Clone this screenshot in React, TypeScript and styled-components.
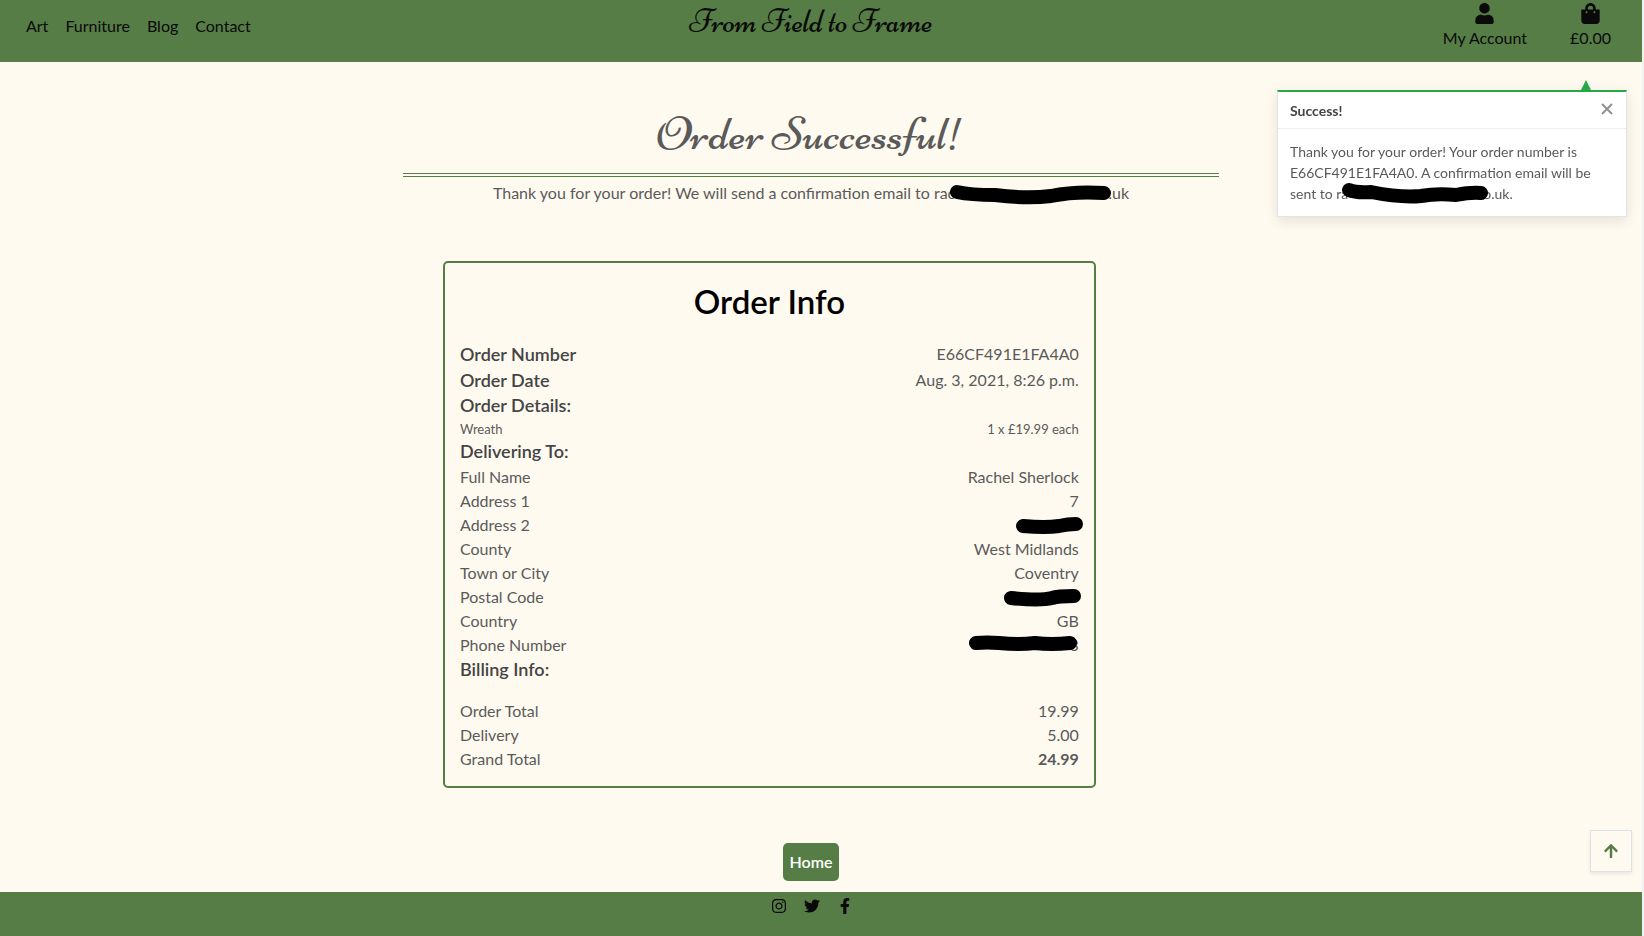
import React from "react";
import styled, { createGlobalStyle } from "styled-components";
import { FaUser, FaShoppingBag, FaInstagram, FaTwitter, FaFacebookF, FaArrowUp } from "react-icons/fa";

const GREEN = "#567d46";

const GlobalStyle = createGlobalStyle`
  *, *::before, *::after { box-sizing: border-box; }
  html { background: #f1f1f1; }
  body {
    margin: 0;
    font-family: Lato, "Liberation Sans", sans-serif;
    font-size: 16px;
    line-height: 24px;
    color: #5a5a5a;
  }
  h1, h2, h3, p, dl, dt, dd, ul { margin: 0; padding: 0; font-weight: inherit; }
  a { color: inherit; text-decoration: none; }
`;

const Page = styled.div`
  display: flex;
  flex-direction: column;
  min-height: 100vh;
  margin-right: 2px;
  background: #fffaf0;
`;

const Header = styled.header`
  display: grid;
  grid-template-columns: 1fr auto 1fr;
  height: 62px;
  padding: 0 31px 0 26px;
  background: ${GREEN};
  color: #0a0a0a;
`;

const Nav = styled.nav`
  display: flex;
  gap: 17px;
  padding-top: 14px;
`;

const Brand = styled.a`
  padding: 3px 15px 0 0;
  font-family: Niconne, "Liberation Serif", serif;
  font-size: 32px;
  line-height: 38px;
`;

const Account = styled.div`
  display: flex;
  justify-content: flex-end;
  gap: 43px;
`;

const AccountLink = styled.a`
  display: flex;
  flex-direction: column;
  align-items: center;
  gap: 2px;
  padding-top: 3px;
`;

const Main = styled.main`
  flex: 1;
  display: flex;
  flex-direction: column;
  align-items: center;
  padding: 40px 20px 11px 0;
`;

const Column = styled.section`
  width: calc(50% + 5px);
`;

const Title = styled.h1`
  padding-bottom: 7px;
  border-bottom: 4px double ${GREEN};
  font-family: Niconne, "Liberation Serif", serif;
  font-size: 48px;
  line-height: 64px;
  text-align: center;
`;

const Lead = styled.p`
  padding-top: 4px;
  text-align: center;
  white-space: nowrap;
`;

const Card = styled.div`
  width: 80%;
  margin: 56px 0 0 40px;
  padding: 15px;
  border: 2px solid ${GREEN};
  border-radius: 5px;
`;

const CardTitle = styled.h2`
  margin-bottom: 17px;
  font-size: 33px;
  line-height: 46px;
  font-weight: 600;
  text-align: center;
  color: #000;
`;

const Rows = styled.dl<{ $spaced?: boolean }>`
  margin-top: ${(p) => (p.$spaced ? "16px" : "0")};
`;

const Row = styled.div<{ $kind?: "head" | "small" }>`
  display: flex;
  justify-content: space-between;
  line-height: ${(p) => (p.$kind === "head" ? "26px" : p.$kind === "small" ? "20px" : "24px")};
  font-size: ${(p) => (p.$kind === "small" ? "13px" : "16px")};
`;

const Strong = styled.dt`
  font-size: 18px;
  font-weight: 600;
  color: #444;
`;

const Heading = styled.h3`
  padding-bottom: 2px;
  font-size: 18px;
  line-height: 24px;
  font-weight: 600;
  color: #444;
`;

const Total = styled.dd`
  font-weight: 700;
`;

const HomeLink = styled.a`
  margin-top: 55px;
  padding: 7px;
  border-radius: 5px;
  background: ${GREEN};
  color: #fff;
  font-weight: 600;
`;

const Footer = styled.footer`
  display: flex;
  justify-content: center;
  gap: 17px;
  height: 44px;
  padding: 6px 18px 0 0;
  background: ${GREEN};
  color: #0a0a0a;
  a { display: flex; height: 16px; }
`;

const TopButton = styled.button`
  position: fixed;
  right: 12px;
  bottom: 64px;
  display: flex;
  align-items: center;
  justify-content: center;
  width: 42px;
  height: 42px;
  border: 1px solid #dee2e6;
  background: #fffaf0;
  box-shadow: 0 2px 4px rgba(0, 0, 0, 0.08);
  color: ${GREEN};
`;

const Toast = styled.aside`
  position: fixed;
  top: 90px;
  right: 17px;
  width: 350px;
  border: 1px solid rgba(0, 0, 0, 0.1);
  border-top: 2px solid #28a745;
  background: #fff;
  box-shadow: 0 4px 12px rgba(0, 0, 0, 0.1);
  font-size: 14px;
  line-height: 21px;
`;

const Pointer = styled.span`
  position: absolute;
  top: -12px;
  right: 35px;
  border: 5px solid transparent;
  border-top: 0;
  border-bottom: 10px solid #28a745;
`;

const ToastHead = styled.div`
  display: flex;
  justify-content: space-between;
  padding: 8px 12px 7px;
  border-bottom: 1px solid #eee;
  font-weight: 700;
  color: #444;
`;

const CloseButton = styled.button`
  display: flex;
  height: 20px;
  padding: 3px 1px;
  border: 0;
  background: none;
`;

const ToastBody = styled.p`
  padding: 12px;
`;

const Hidden = styled.span<{ $width: number }>`
  position: relative;
  display: inline-block;
  width: ${(p) => p.$width}px;
  height: 14px;
  vertical-align: -2px;
`;

const Marker = styled.svg<{ $left: number; $top: number }>`
  position: absolute;
  left: ${(p) => p.$left}px;
  top: ${(p) => p.$top}px;
  overflow: visible;
  fill: none;
  stroke: #000;
  stroke-width: 14;
  stroke-linecap: round;
  stroke-linejoin: round;
`;

type MarkProps = { space: number; left: number; top: number; width: number; path: string };

function Redacted({ space, left, top, width, path }: MarkProps) {
  return (
    <Hidden $width={space}>
      <Marker $left={left} $top={top} width={width} height={16} aria-label="redacted" role="img">
        <path d={path} />
      </Marker>
    </Hidden>
  );
}

const delivery: [string, React.ReactNode][] = [
  ["Full Name", "Rachel Sherlock"],
  ["Address 1", "7"],
  ["Address 2", <Redacted space={62} left={-1} top={-4} width={68} path="M7 11Q30 13 43 11Q52 9 60 9" />],
  ["County", "West Midlands"],
  ["Town or City", "Coventry"],
  ["Postal Code", <Redacted space={74} left={-1} top={-4} width={78} path="M7 11Q36 14 48 11Q54 9 70 9" />],
  ["Country", "GB"],
  ["Phone Number", <><Redacted space={100} left={-1} top={-4} width={109} path="M7 8Q18 7 30 8Q50 10 66 8Q82 10 101 8" />3</>],
];

export default function App() {
  return (
    <>
      <GlobalStyle />
      <Page>
        <Header>
          <Nav>
            <a href="#art">Art</a>
            <a href="#furniture">Furniture</a>
            <a href="#blog">Blog</a>
            <a href="#contact">Contact</a>
          </Nav>
          <Brand href="#home">From Field to Frame</Brand>
          <Account>
            <AccountLink href="#account"><FaUser size={21} />My Account</AccountLink>
            <AccountLink href="#bag"><FaShoppingBag size={21} />£0.00</AccountLink>
          </Account>
        </Header>
        <Main>
          <Column>
            <Title>Order Successful!</Title>
            <Lead>
              Thank you for your order! We will send a confirmation email to rac
              <Redacted space={153} left={-6} top={-4} width={163} path="M8 9Q22 12 46 12Q78 16 102 13Q126 8 155 10" />
              .uk
            </Lead>
            <Card>
              <CardTitle>Order Info</CardTitle>
              <Rows>
                <Row $kind="head"><Strong>Order Number</Strong><dd>E66CF491E1FA4A0</dd></Row>
                <Row $kind="head"><Strong>Order Date</Strong><dd>Aug. 3, 2021, 8:26 p.m.</dd></Row>
              </Rows>
              <Heading>Order Details:</Heading>
              <Rows>
                <Row $kind="small"><dt>Wreath</dt><dd>1 x £19.99 each</dd></Row>
              </Rows>
              <Heading>Delivering To:</Heading>
              <Rows>
                {delivery.map(([label, value]) => (
                  <Row key={label}><dt>{label}</dt><dd>{value}</dd></Row>
                ))}
              </Rows>
              <Heading>Billing Info:</Heading>
              <Rows $spaced>
                <Row><dt>Order Total</dt><dd>19.99</dd></Row>
                <Row><dt>Delivery</dt><dd>5.00</dd></Row>
                <Row><dt>Grand Total</dt><Total>24.99</Total></Row>
              </Rows>
            </Card>
          </Column>
          <HomeLink href="#home">Home</HomeLink>
        </Main>
        <Footer>
          <a href="#instagram" aria-label="Instagram"><FaInstagram size={16} /></a>
          <a href="#twitter" aria-label="Twitter"><FaTwitter size={16} /></a>
          <a href="#facebook" aria-label="Facebook"><FaFacebookF size={16} /></a>
        </Footer>
      </Page>
      <Toast role="status">
        <Pointer />
        <ToastHead>
          Success!
          <CloseButton type="button" aria-label="Close">
            <svg width="12" height="12" viewBox="0 0 12 12" stroke="#909090" strokeWidth="2">
              <path d="M1 1L11 11M11 1L1 11" />
            </svg>
          </CloseButton>
        </ToastHead>
        <ToastBody>
          Thank you for your order! Your order number is E66CF491E1FA4A0. A confirmation email will be
          sent to ra
          <Redacted space={135} left={-7} top={-5} width={148} path="M8 8Q15 11 30 10Q60 16 80 14Q96 11 115 13Q130 10 140 11" />
          o.uk.
        </ToastBody>
      </Toast>
      <TopButton type="button" aria-label="Back to top"><FaArrowUp size={16} /></TopButton>
    </>
  );
}
